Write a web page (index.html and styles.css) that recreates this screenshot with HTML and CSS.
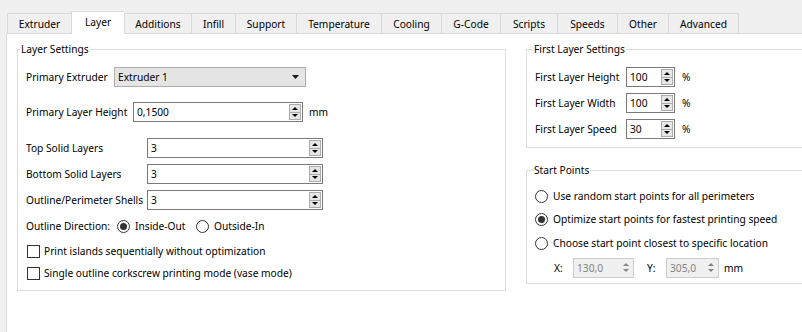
FILE: index.html
```html
<!DOCTYPE html>
<html>
<head>
<meta charset="utf-8">
<link rel="stylesheet" href="styles.css">
</head>
<body>
<div class="window">
  <div class="tabs">
    <div class="tab t-extruder">Extruder</div>
    <div class="tab t-layer active">Layer</div>
    <div class="tab t-additions">Additions</div>
    <div class="tab t-infill">Infill</div>
    <div class="tab t-support">Support</div>
    <div class="tab t-temperature">Temperature</div>
    <div class="tab t-cooling">Cooling</div>
    <div class="tab t-gcode">G-Code</div>
    <div class="tab t-scripts">Scripts</div>
    <div class="tab t-speeds">Speeds</div>
    <div class="tab t-other">Other</div>
    <div class="tab t-advanced last">Advanced</div>
  </div>
  <div class="pane">
    <fieldset class="group layer-group">
      <legend class="legend-left">Layer Settings</legend>
      <div class="group-body layer-body">
        <div class="row mt11">
          <span class="lbl w-extruder">Primary Extruder</span>
          <div class="combo">
            <span class="combo-text">Extruder 1</span>
            <svg class="caret" width="7" height="4" viewBox="0 0 7 4"><path d="M0 0H7L3.5 4Z" fill="#1a1a1a"/></svg>
          </div>
        </div>
        <div class="row mt15">
          <span class="lbl w-height">Primary Layer Height</span>
          <div class="spin spin-height"><span class="val">0,1500</span><div class="btns"><span class="up"></span><span class="down"></span></div></div>
          <span class="unit">mm</span>
        </div>
        <div class="row mt16">
          <span class="lbl w-layers">Top Solid Layers</span>
          <div class="spin spin-layers"><span class="val">3</span><div class="btns"><span class="up"></span><span class="down"></span></div></div>
        </div>
        <div class="row mt6">
          <span class="lbl w-layers">Bottom Solid Layers</span>
          <div class="spin spin-layers"><span class="val">3</span><div class="btns"><span class="up"></span><span class="down"></span></div></div>
        </div>
        <div class="row mt6">
          <span class="lbl w-layers">Outline/Perimeter Shells</span>
          <div class="spin spin-layers"><span class="val">3</span><div class="btns"><span class="up"></span><span class="down"></span></div></div>
        </div>
        <div class="row mt6">
          <span class="lbl dir-label">Outline Direction:</span>
          <span class="radio checked"></span><span class="opt-text inside-out">Inside-Out</span>
          <span class="radio"></span><span class="opt-text">Outside-In</span>
        </div>
        <div class="row mt5">
          <span class="check"></span><span class="check-text">Print islands sequentially without optimization</span>
        </div>
        <div class="row mt2">
          <span class="check"></span><span class="check-text">Single outline corkscrew printing mode (vase mode)</span>
        </div>
      </div>
    </fieldset>

    <div class="right-col">
      <fieldset class="group first-group">
        <legend class="legend-right">First Layer Settings</legend>
        <div class="group-body first-body">
          <div class="row mt11">
            <span class="lbl w-first">First Layer Height</span>
            <div class="spin spin-small"><span class="val">100</span><div class="btns"><span class="up"></span><span class="down"></span></div></div>
            <span class="pct">%</span>
          </div>
          <div class="row mt6">
            <span class="lbl w-first">First Layer Width</span>
            <div class="spin spin-small"><span class="val">100</span><div class="btns"><span class="up"></span><span class="down"></span></div></div>
            <span class="pct">%</span>
          </div>
          <div class="row mt6">
            <span class="lbl w-first">First Layer Speed</span>
            <div class="spin spin-small"><span class="val">30</span><div class="btns"><span class="up"></span><span class="down"></span></div></div>
            <span class="pct">%</span>
          </div>
        </div>
      </fieldset>

      <fieldset class="group start-group">
        <legend class="legend-right">Start Points</legend>
        <div class="group-body start-body">
          <div class="row mt9">
            <span class="radio"></span><span class="opt-text">Use random start points for all perimeters</span>
          </div>
          <div class="row mt3">
            <span class="radio checked"></span><span class="opt-text">Optimize start points for fastest printing speed</span>
          </div>
          <div class="row mt4">
            <span class="radio"></span><span class="opt-text">Choose start point closest to specific location</span>
          </div>
          <div class="row xy-row mt4">
            <span class="axis axis-x">X:</span>
            <div class="spin disabled spin-x"><span class="val">130,0</span><div class="btns"><span class="up"></span><span class="down"></span></div></div>
            <span class="axis axis-y">Y:</span>
            <div class="spin disabled spin-y"><span class="val">305,0</span><div class="btns"><span class="up"></span><span class="down"></span></div></div>
            <span class="unit xy-unit">mm</span>
          </div>
        </div>
      </fieldset>
    </div>
  </div>
</div>
</body>
</html>
```

FILE: styles.css
```css
html, body {
  margin: 0;
  padding: 0;
  background: #f0f0f0;
  overflow: hidden;
}

.window {
  width: 802px;
  height: 332px;
  overflow: hidden;
  font-family: "Noto Sans", "Open Sans", sans-serif;
  font-size: 10.2px;
  line-height: 14px;
  color: #000;
  background: #f0f0f0;
}

/* ---------- tabs ---------- */
.tabs {
  display: flex;
  align-items: flex-end;
  height: 33px;
  padding-left: 7px;
  box-sizing: border-box;
}

.tab {
  box-sizing: border-box;
  height: 20px;
  display: flex;
  align-items: center;
  justify-content: center;
  border-top: 1px solid #d9d9d9;
  border-left: 1px solid #d9d9d9;
  background: #f0f0f0;
  white-space: nowrap;
}

.tab.last { border-right: 1px solid #d9d9d9; }

.tab.active {
  height: 23px;
  margin-bottom: -1px;
  background: #fff;
  position: relative;
  z-index: 1;
  padding-bottom: 2px;
}

.t-extruder { width: 64px; }
.t-layer { width: 53px; }
.t-additions { width: 67px; }
.t-infill { width: 44px; }
.t-support { width: 61px; }
.t-temperature { width: 85px; }
.t-cooling { width: 60px; }
.t-gcode { width: 59px; }
.t-scripts { width: 57px; }
.t-speeds { width: 60px; }
.t-other { width: 51px; }
.t-advanced { width: 71px; }

/* ---------- pane ---------- */
.pane {
  margin-left: 6px;
  height: 299px;
  background: #fff;
  border-top: 1px solid #d9d9d9;
  border-left: 1px solid #d9d9d9;
  display: flex;
  align-items: flex-start;
  gap: 20px;
  padding: 8px 0 0 10px;
  box-sizing: border-box;
}

/* ---------- group boxes ---------- */
.group {
  margin: 0;
  padding: 0;
  min-width: 0;
  border: 1px solid #dcdcdc;
  box-sizing: border-box;
}

.group legend {
  padding: 0 1px;
  line-height: 14px;
}

.legend-left { margin-left: 2px; }
.legend-right { margin-left: 6px; }

.layer-group { width: 489px; flex: none; }

.right-col {
  flex: none;
  width: 300px;
  display: flex;
  flex-direction: column;
}

.start-group { margin-top: 15px; }

.group-body { display: flex; flex-direction: column; }

.layer-body { padding: 0 0 7px 8px; }
.first-body { padding: 0 0 8px 8px; }
.start-body { padding: 0 0 5px 8px; }

.row {
  display: flex;
  align-items: center;
  height: 20px;
  white-space: nowrap;
}

.mt2 { margin-top: 2px; }
.mt3 { margin-top: 3px; }
.mt4 { margin-top: 4px; }
.mt5 { margin-top: 5px; }
.mt6 { margin-top: 6px; }
.mt9 { margin-top: 9px; }
.mt11 { margin-top: 11px; }
.mt15 { margin-top: 15px; }
.mt16 { margin-top: 16px; }

.lbl { flex: none; }
.w-extruder { width: 88px; }
.w-height { width: 107px; }
.w-layers { width: 121px; }
.w-first { width: 91px; }

/* ---------- combo ---------- */
.combo {
  box-sizing: border-box;
  width: 192px;
  height: 20px;
  border: 1px solid #adadad;
  background: #e5e5e5;
  display: flex;
  align-items: center;
  padding: 0 6px 0 3px;
}

.combo-text { flex: 1; }
.caret { display: block; }

/* ---------- spin boxes ---------- */
.spin {
  box-sizing: border-box;
  height: 20px;
  border: 1px solid #7a7a7a;
  background: #fff;
  display: flex;
  align-items: stretch;
  padding: 1px;
  flex: none;
}

.spin .val {
  flex: 1;
  display: flex;
  align-items: center;
  padding-left: 2px;
}

.spin-height { width: 170px; }
.spin-layers { width: 176px; }
.spin-small { width: 49px; }
.spin-x { width: 61px; }
.spin-y { width: 53px; }

.btns {
  width: 12px;
  box-sizing: border-box;
  border: 1px solid #acacac;
  background: #e6e6e6;
  display: flex;
  flex-direction: column;
}

.btns span {
  flex: 1;
  display: flex;
  align-items: center;
  justify-content: center;
}

.btns .up { border-bottom: 1px solid #acacac; }

.btns .up::before {
  content: "";
  border-left: 3px solid transparent;
  border-right: 3px solid transparent;
  border-bottom: 3px solid #000;
}

.btns .down::before {
  content: "";
  border-left: 3px solid transparent;
  border-right: 3px solid transparent;
  border-top: 3px solid #000;
}

.spin.disabled {
  border-color: #cccccc;
  background: #f0f0f0;
  color: #838383;
}

.spin.disabled .btns {
  border: none;
  background: transparent;
  padding-top: 2px;
  padding-bottom: 2px;
}

.spin.disabled .btns .up { border-bottom: none; }
.spin.disabled .btns .up::before { border-bottom-color: #838383; }
.spin.disabled .btns .down::before { border-top-color: #838383; }

.unit { margin-left: 6px; }
.pct { margin-left: 7px; }

/* ---------- radios & checkboxes ---------- */
.radio {
  flex: none;
  box-sizing: border-box;
  width: 13px;
  height: 13px;
  border: 1px solid #333;
  border-radius: 50%;
  background: #fff;
  display: flex;
  align-items: center;
  justify-content: center;
  margin-right: 5px;
}

.radio.checked::after {
  content: "";
  width: 7px;
  height: 7px;
  border-radius: 50%;
  background: #333;
}

.dir-label { width: 91px; }
.inside-out { width: 61px; flex: none; }

.check {
  flex: none;
  box-sizing: border-box;
  width: 13px;
  height: 13px;
  border: 1px solid #333;
  background: #fff;
  margin: 0 4px 0 1px;
}

/* ---------- XY row ---------- */
.xy-row { height: 21px; }
.axis { flex: none; width: 19px; }
.axis-x { margin-left: 19px; }
.axis-y { margin-left: 13px; }
.xy-unit { margin-left: 5px; }
```
